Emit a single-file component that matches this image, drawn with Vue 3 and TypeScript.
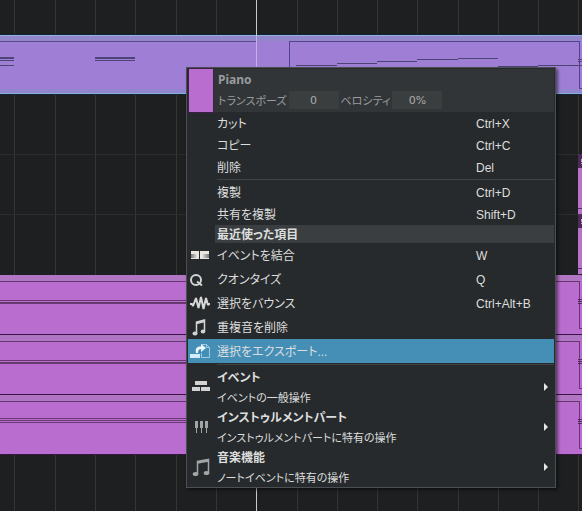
<script setup lang="ts">
import { ref } from 'vue'

type IconName = 'merge' | 'quantize' | 'wave' | 'notes' | 'export' | 'bricks' | 'keys'

interface Command {
  label: string
  keys?: string
  icon?: IconName
  active?: boolean
}

interface Submenu {
  title: string
  hint: string
  icon: IconName
}

const editCommands: Command[] = [
  { label: 'カット', keys: 'Ctrl+X' },
  { label: 'コピー', keys: 'Ctrl+C' },
  { label: '削除', keys: 'Del' },
]

const duplicateCommands: Command[] = [
  { label: '複製', keys: 'Ctrl+D' },
  { label: '共有を複製', keys: 'Shift+D' },
]

const recentCommands: Command[] = [
  { label: 'イベントを結合', keys: 'W', icon: 'merge' },
  { label: 'クオンタイズ', keys: 'Q', icon: 'quantize' },
  { label: '選択をバウンス', keys: 'Ctrl+Alt+B', icon: 'wave' },
  { label: '重複音を削除', icon: 'notes' },
  { label: '選択をエクスポート...', icon: 'export', active: true },
]

const submenus: Submenu[] = [
  { title: 'イベント', hint: 'イベントの一般操作', icon: 'bricks' },
  { title: 'インストゥルメントパート', hint: 'インストゥルメントパートに特有の操作', icon: 'keys' },
  { title: '音楽機能', hint: 'ノートイベントに特有の操作', icon: 'notes' },
]

const transpose = ref('0')
const velocity = ref('0%')

const gridLines = [14, 55, 95, 135, 176, 216, 297, 337, 377, 417, 458, 498, 538, 578]

// Each lower lane: top edge and the offsets of its long note lines
const lanes = [
  { top: 275, notes: [[25, 1], [27, 2]] },
  { top: 335, notes: [[25, 1], [27, 2]] },
  { top: 395, notes: [[23, 1], [25, 1], [27, 1]] },
]

// x, y, width, height of the notes in the selected clip
const melody = [
  [0, 57, 14, 2], [0, 60, 14, 1], [0, 65, 14, 1],
  [95, 57, 40, 2], [95, 60, 40, 1],
  [296, 65, 14, 1], [310, 65, 27, 1], [337, 63, 40, 1], [377, 61, 40, 1],
  [417, 59, 41, 1], [458, 58, 40, 1], [498, 66, 40, 1], [538, 65, 40, 1],
  [578, 59, 4, 1], [578, 61, 4, 1], [578, 65, 4, 1],
]
</script>

<template>
  <main class="workspace">
    <svg class="timeline" viewBox="0 0 582 511" preserveAspectRatio="xMinYMin slice" shape-rendering="crispEdges" aria-hidden="true">
      <rect width="582" height="511" fill="#1e1f20" />
      <rect v-for="x in gridLines" :key="x" :x="x" y="0" width="1" height="511" fill="#333535" />
      <rect y="154" width="582" height="1" fill="#2b2d2d" />
      <rect y="214" width="582" height="1" fill="#2b2d2d" />

      <g>
        <rect y="34" width="582" height="61" fill="#14232e" />
        <rect y="35" width="582" height="59" fill="#9f7fd6" />
        <rect y="36" width="582" height="5" fill="#9287cb" />
        <rect y="89" width="582" height="4" fill="#9287cf" />
        <rect y="35" width="582" height="1" fill="#8fb0e2" />
        <rect y="93" width="582" height="1" fill="#82b0e0" />
        <rect y="41" width="256" height="1" fill="#5c4a8e" />
        <path d="M289.500 88V41.500H579.500V88.500H582" fill="none" stroke="#53438a" />
        <rect v-for="(n, i) in melody" :key="i" :x="n[0]" :y="n[1]" :width="n[2]" :height="n[3]" fill="#4d4478" />
      </g>

      <g v-for="lane in lanes" :key="lane.top">
        <rect :y="lane.top" width="582" height="59" fill="#b96dcf" />
        <rect :y="lane.top" width="582" height="6" fill="#b075c3" />
        <rect :y="lane.top + 6" width="579" height="1" fill="#673675" />
        <rect v-for="(n, i) in lane.notes" :key="i" :y="lane.top + n[0]" width="500" :height="n[1]" fill="#66396f" />
        <rect x="579" :y="lane.top + 6" width="1" height="48" fill="#673675" />
        <rect x="579" :y="lane.top + 53" width="3" height="1" fill="#673675" />
        <rect v-for="o in [24, 26, 28]" :key="o" x="578" :y="lane.top + o" width="4" height="1" fill="#532b61" />
        <rect :y="lane.top + 59" width="582" height="1" fill="#3a1446" />
      </g>

      <g v-for="y in [154, 214]" :key="y">
        <rect x="578" :y="y" width="4" height="14" fill="#4e2a58" />
        <path :d="`M582 ${y + 5}h-1v2h1M582 ${y + 9}h-1`" stroke="#c9a7cf" fill="none" />
        <rect x="578" :y="y + 14" width="4" height="46" fill="#b673c8" />
        <rect x="578" :y="y + 54" width="4" height="1" fill="#5b3267" />
      </g>

      <rect x="256" width="1" height="511" fill="#c9cacb" />
      <rect x="256" y="36" width="1" height="57" fill="#c3b3e4" />
    </svg>

    <nav class="menu" aria-label="Piano">
      <header class="part">
        <span class="swatch"></span>
        <div class="part-body">
          <h1 class="part-name">Piano</h1>
          <div class="fields">
            <label for="transpose">トランスポーズ</label>
            <input id="transpose" v-model="transpose" type="text" />
            <label for="velocity">ベロシティ</label>
            <input id="velocity" v-model="velocity" type="text" />
          </div>
        </div>
      </header>

      <button v-for="c in editCommands" :key="c.label" type="button" class="row">
        <span class="label">{{ c.label }}</span><span class="keys">{{ c.keys }}</span>
      </button>
      <hr class="rule" />
      <button v-for="c in duplicateCommands" :key="c.label" type="button" class="row">
        <span class="label">{{ c.label }}</span><span class="keys">{{ c.keys }}</span>
      </button>

      <h2 class="band">最近使った項目</h2>
      <button v-for="c in recentCommands" :key="c.label" type="button" class="row tall" :class="{ active: c.active }">
        <svg v-if="c.icon === 'merge'" class="icon" viewBox="0 0 24 24" aria-hidden="true">
          <defs>
            <linearGradient id="fade-out"><stop offset="0" stop-color="#777" /><stop offset="1" stop-color="#f4f2ee" /></linearGradient>
            <linearGradient id="fade-in"><stop offset="0" stop-color="#f4f2ee" /><stop offset="1" stop-color="#777" /></linearGradient>
          </defs>
          <rect x="3" y="8" width="8" height="8" fill="#e9e6e2" />
          <rect x="3" y="11" width="7" height="4" fill="url(#fade-out)" />
          <rect x="12" y="8" width="9" height="8" fill="#e9e6e2" />
          <rect x="13" y="11" width="8" height="4" fill="url(#fade-in)" />
        </svg>
        <svg v-else-if="c.icon === 'quantize'" class="icon" viewBox="0 0 24 24" fill="none" stroke="#d2d4d4" stroke-width="2" aria-hidden="true">
          <ellipse cx="8" cy="13" rx="5" ry="5" />
          <path d="M9 14.500l5 4" />
        </svg>
        <svg v-else-if="c.icon === 'wave'" class="icon" viewBox="0 0 24 24" fill="none" stroke="#d6d8d8" stroke-width="2" stroke-linejoin="bevel" aria-hidden="true">
          <path d="M2 13h2l1 2 3-8 2.500 10L13 6l2.500 12L18 7l2 7 1-1h1" />
        </svg>
        <svg v-else-if="c.icon === 'notes'" class="icon" viewBox="0 0 24 24" aria-hidden="true">
          <path d="M8.500 18V7l8-2v11M8.500 8.500l8-2" fill="none" stroke="#d2d4d4" stroke-width="1.500" />
          <ellipse cx="7" cy="18.500" rx="2.500" ry="2" fill="#d2d4d4" />
          <ellipse cx="15" cy="16.500" rx="2.300" ry="2" fill="#d2d4d4" />
        </svg>
        <svg v-else-if="c.icon === 'export'" class="icon" viewBox="0 0 24 24" aria-hidden="true">
          <rect x="2" y="15" width="10" height="4" fill="#d3edf8" />
          <path d="M13.500 7V5.500h5l3 3v10h-8V14M18.500 5.500v3h3" fill="none" stroke="#9bcce2" />
          <path d="M8 14c-1-5 1-6.500 5-6.500V5l5 4-5 4v-3c-2 0-3 1-3 4z" fill="#edf8fc" />
        </svg>
        <span class="label">{{ c.label }}</span><span class="keys">{{ c.keys }}</span>
      </button>
      <hr class="rule" />

      <button v-for="s in submenus" :key="s.title" type="button" class="group">
        <svg v-if="s.icon === 'bricks'" class="icon" viewBox="0 0 24 24" fill="#d2d3d2" aria-hidden="true">
          <path d="M7 6h12v4H7zM4 12h8v4H4zM13 12h9v4h-9z" />
        </svg>
        <svg v-else-if="s.icon === 'keys'" class="icon" viewBox="0 0 24 24" fill="#a3a5a5" aria-hidden="true">
          <path d="M7 6h3v7H9v5H8v-5H7zM12 6h3v7h-1v5h-1v-5h-1zM17 6h3v7h-1v5h-1v-5h-1z" />
        </svg>
        <svg v-else class="icon" viewBox="0 0 24 24" aria-hidden="true">
          <path d="M9.500 19V6.500l11-2V18M9.500 8l11-2" fill="none" stroke="#a3a5a5" stroke-width="1.500" />
          <ellipse cx="7.500" cy="19" rx="2.800" ry="2" fill="#a3a5a5" />
          <ellipse cx="18.500" cy="18" rx="2.800" ry="2" fill="#a3a5a5" />
        </svg>
        <span class="group-text">
          <strong>{{ s.title }}</strong>
          <span class="hint">{{ s.hint }}</span>
        </span>
        <svg class="arrow" viewBox="0 0 4 8" fill="#e6e7e7" aria-hidden="true"><path d="M0 0l4 4-4 4z" /></svg>
      </button>
    </nav>
  </main>
</template>

<style>
body {
  margin: 0;
  background: #1e1f20;
}
</style>

<style scoped>
.workspace {
  position: relative;
  min-height: 100vh;
  overflow: hidden;
  font-family: "Liberation Sans", "Noto Sans CJK JP", sans-serif;
  font-size: 12px;
  color: #dcdede;
}

.timeline {
  position: absolute;
  inset: 0;
  width: 100%;
  height: 100%;
}

.menu {
  position: absolute;
  top: 67px;
  left: 186px;
  box-sizing: border-box;
  width: 370px;
  padding: 1px;
  border: 1px solid #4c5052;
  background: #272a2c;
  box-shadow: 2px 2px 3px rgba(0, 0, 0, 0.5);
  font-feature-settings: "palt";
}

.part {
  display: flex;
  gap: 5px;
  height: 43px;
  background: #323537;
  color: #999c9d;
}

.swatch {
  width: 24px;
  margin-left: 1px;
  background: #b96dcf;
  outline: 1px solid #3c2047;
}

.part-name {
  margin: 0;
  font: bold 12px/22px "Noto Sans", sans-serif;
}

.fields {
  display: flex;
  align-items: center;
  gap: 2px;
  font-size: 11px;
}

.fields input {
  box-sizing: border-box;
  width: 50px;
  height: 18px;
  padding: 0;
  border: 0;
  background: #3b3e3f;
  color: #aaacac;
  font: 11px "DejaVu Sans", sans-serif;
  text-align: center;
}

button {
  width: 100%;
  padding: 0;
  border: 0;
  background: none;
  color: inherit;
  font: inherit;
  font-feature-settings: inherit;
  text-align: left;
}

.row {
  display: grid;
  grid-template-columns: 29px 1fr 78px;
  align-items: center;
  height: 22px;
  line-height: 20px;
}

.tall {
  height: 24px;
}

.active {
  background: #458fb7;
}

.label {
  grid-column: 2;
  padding-top: 2px;
}

.keys {
  grid-column: 3;
  padding-top: 2px;
}

.icon {
  width: 24px;
  height: 24px;
}

.rule {
  height: 1px;
  margin: 1px 0 1px 29px;
  border: 0;
  background: #404345;
}

.band {
  box-sizing: border-box;
  height: 18px;
  margin: 0 0 0 27px;
  padding: 2px 0 0 2px;
  background: #3b3e40;
  font-size: 12px;
  line-height: 16px;
}

.group {
  display: grid;
  grid-template-columns: 29px 1fr 10px;
  align-items: center;
  height: 40px;
}

.group-text {
  display: grid;
  padding-top: 2px;
  line-height: 20px;
}

.hint {
  font-size: 11px;
}

.arrow {
  width: 4px;
  height: 8px;
}
</style>
